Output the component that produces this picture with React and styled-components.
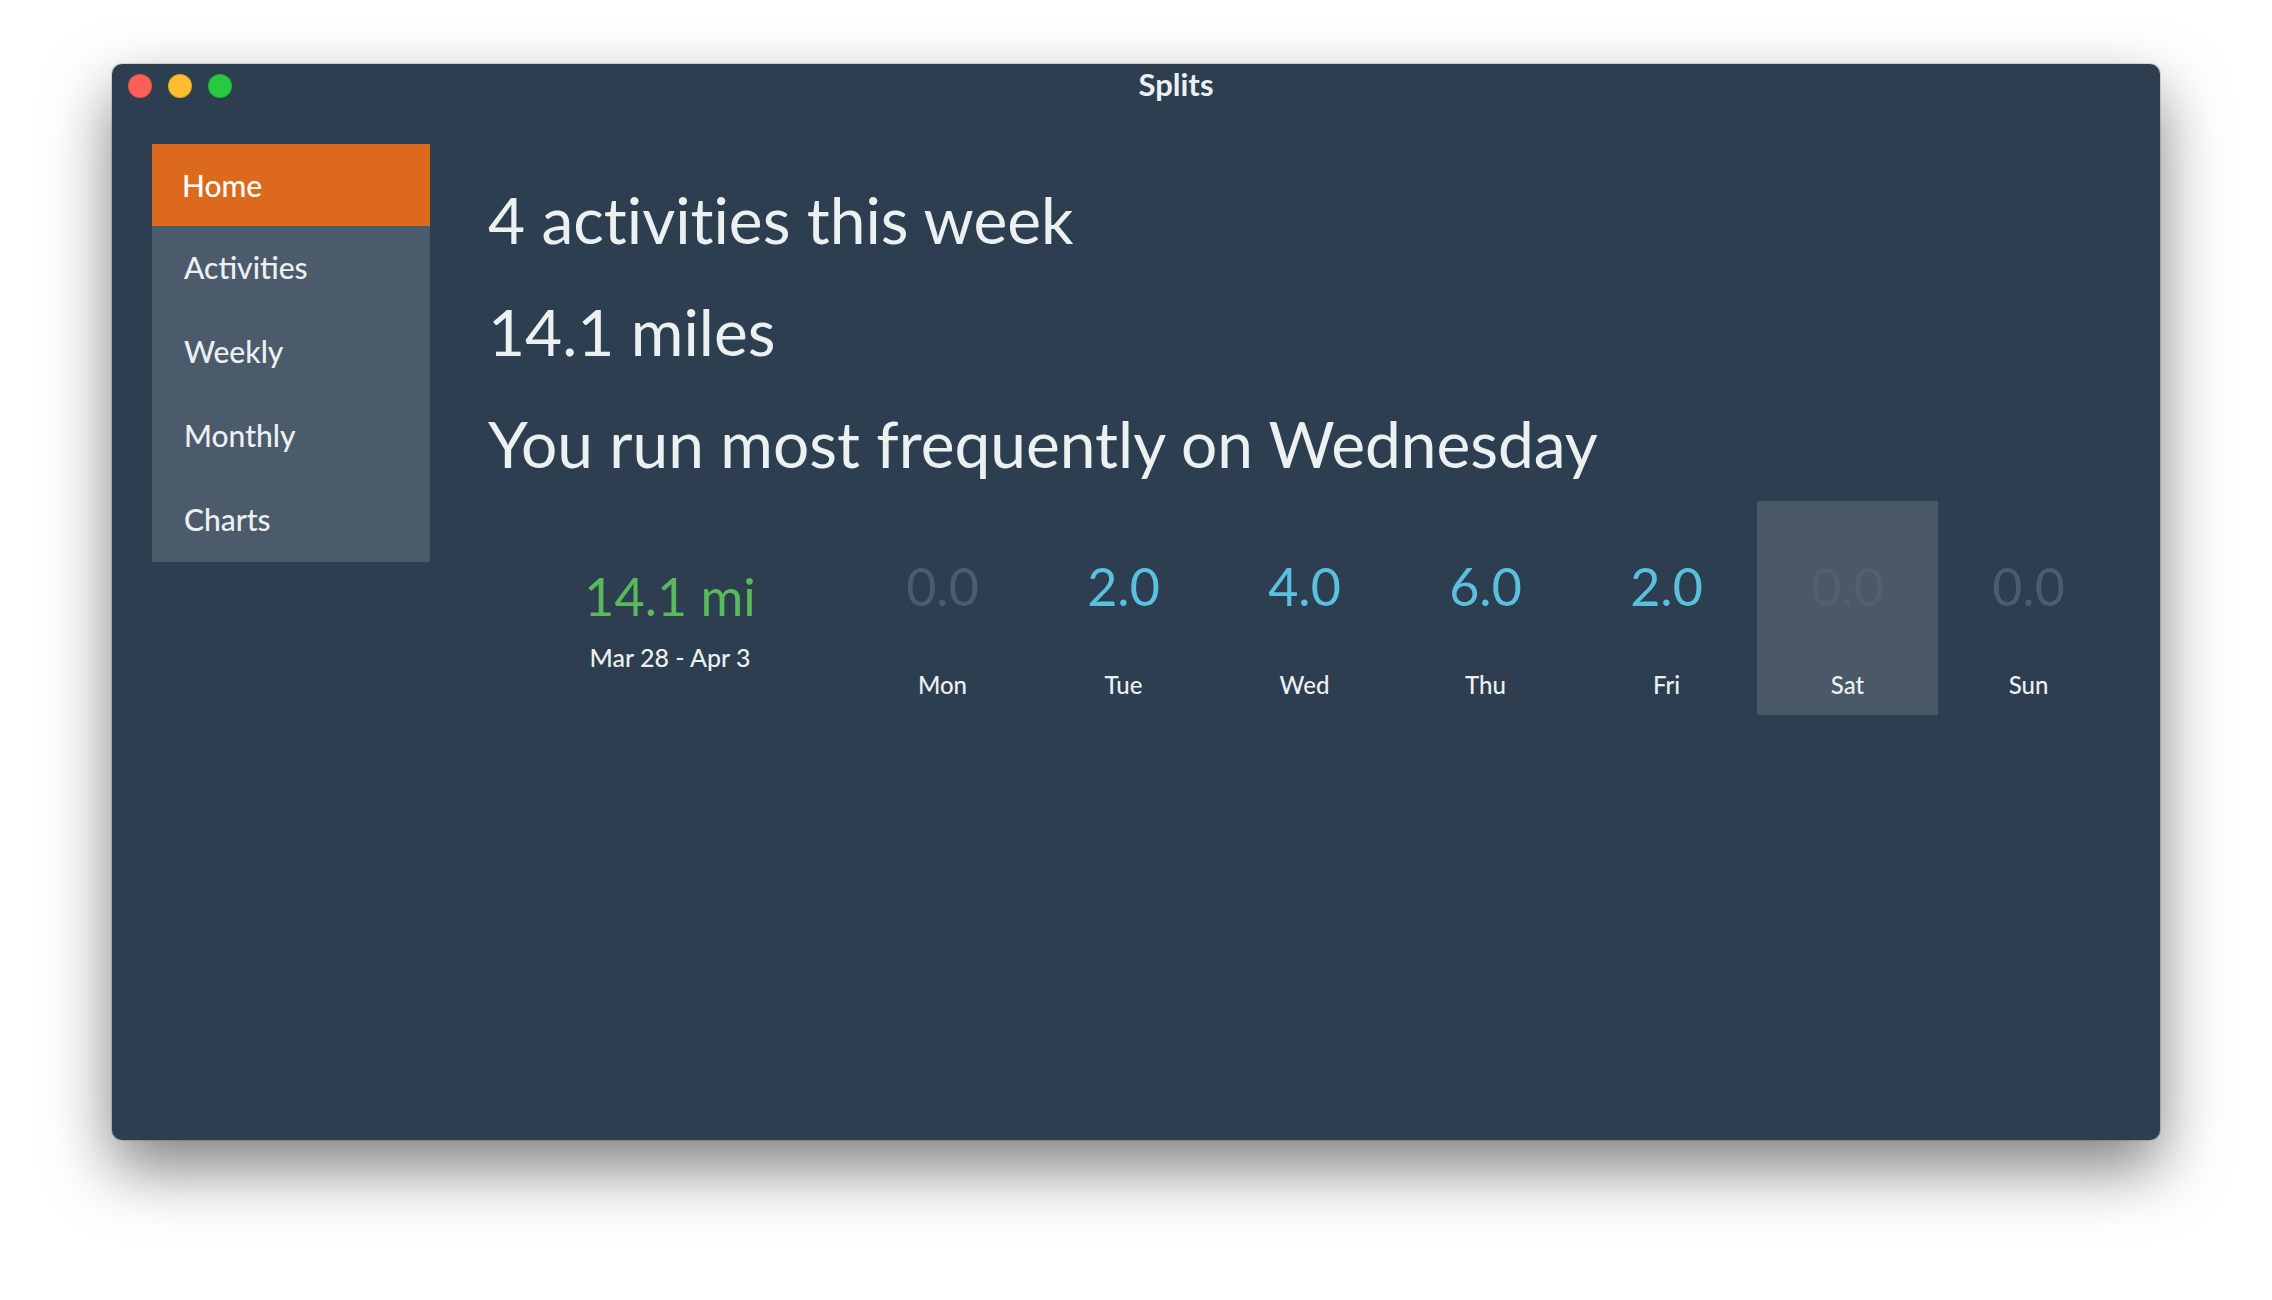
import React from "react";
import styled, { createGlobalStyle } from "styled-components";

const GlobalStyle = createGlobalStyle`
  html, body {
    margin: 0;
    padding: 0;
    background-color: #ffffff;
    font-family: "Lato", "Liberation Sans", sans-serif;
  }
`;

const Page = styled.div`
  width: 2272px;
  height: 1300px;
  padding: 64px 0 0 112px;
  box-sizing: border-box;
`;

const Window = styled.div`
  display: flex;
  flex-direction: column;
  width: 2048px;
  height: 1076px;
  background-color: #2c3e50;
  border-radius: 10px;
  box-shadow: 0 0 0 1px rgba(0, 0, 0, 0.12), 0 28px 64px rgba(0, 0, 0, 0.5);
  overflow: hidden;
`;

const TitleBar = styled.div`
  display: flex;
  align-items: center;
  height: 44px;
  padding-left: 16px;
`;

const Lights = styled.div`
  display: flex;
  gap: 16px;
`;

const Light = styled.span`
  width: 24px;
  height: 24px;
  border-radius: 50%;
  background-color: ${(props) => props.color};
  box-shadow: inset 0 0 0 1px rgba(0, 0, 0, 0.12);
`;

const Title = styled.div`
  flex: 1;
  text-align: center;
  padding-right: 40px;
  padding-bottom: 5px;
  font-weight: 700;
  font-size: 31px;
  color: #ecf0f1;
`;

const Body = styled.div`
  display: flex;
  padding: 36px 42px 0 40px;
`;

const Sidebar = styled.nav`
  display: flex;
  flex-direction: column;
  width: 278px;
  flex-shrink: 0;
  align-self: flex-start;
  background-color: #4c5b6b;
`;

const NavItem = styled.div`
  display: flex;
  align-items: center;
  height: ${(props) => (props.active ? "82px" : "84px")};
  padding-left: ${(props) => (props.active ? "30px" : "32px")};
  padding-bottom: ${(props) => (props.active ? "0" : "3px")};
  box-sizing: border-box;
  background-color: ${(props) => (props.active ? "#dd6a1c" : "transparent")};
  color: ${(props) => (props.active ? "#ffffff" : "#ecf0f1")};
  font-size: 30px;
  font-weight: 500;
`;

const Main = styled.main`
  display: flex;
  flex-direction: column;
  margin-left: 58px;
  padding-top: 38px;
`;

const Headings = styled.div`
  display: flex;
  flex-direction: column;
  gap: 35px;
`;

const Heading = styled.h1`
  margin: 0;
  font-size: 64px;
  font-weight: 400;
  line-height: 1.2;
  color: #ecf0f1;
  font-variant-ligatures: none;
`;

const WeekRow = styled.div`
  display: flex;
  margin-top: 19px;
  height: 214px;
`;

const Summary = styled.div`
  display: flex;
  flex-direction: column;
  align-items: center;
  width: 364px;
  padding-top: 64px;
  box-sizing: border-box;
`;

const Total = styled.div`
  font-size: 52px;
  line-height: 1.2;
  color: #5cb85c;
`;

const Range = styled.div`
  margin-top: 14px;
  font-size: 25px;
  font-weight: 500;
  line-height: 1.2;
  color: #ecf0f1;
`;

const DayCell = styled.div`
  display: flex;
  flex-direction: column;
  align-items: center;
  width: 181px;
  padding-top: 54px;
  box-sizing: border-box;
  background-color: ${(props) => (props.today ? "#4a5868" : "transparent")};
`;

const Miles = styled.div`
  font-size: 52px;
  line-height: 1.2;
  color: ${(props) =>
    props.zero ? (props.today ? "#506071" : "#4d5c6c") : "#5bc0de"};
`;

const DayName = styled.div`
  margin-top: 53px;
  font-size: 24px;
  font-weight: 500;
  line-height: 1.2;
  color: #ecf0f1;
`;

const navItems = ["Home", "Activities", "Weekly", "Monthly", "Charts"];

const days = [
  { name: "Mon", miles: 0 },
  { name: "Tue", miles: 2 },
  { name: "Wed", miles: 4 },
  { name: "Thu", miles: 6 },
  { name: "Fri", miles: 2 },
  { name: "Sat", miles: 0, today: true },
  { name: "Sun", miles: 0 },
];

export default function App() {
  return (
    <Page>
      <GlobalStyle />
      <Window>
        <TitleBar>
          <Lights>
            <Light color="#ff5f57" />
            <Light color="#febc2e" />
            <Light color="#28c840" />
          </Lights>
          <Title>Splits</Title>
        </TitleBar>
        <Body>
          <Sidebar>
            {navItems.map((item) => (
              <NavItem key={item} active={item === "Home"}>
                {item}
              </NavItem>
            ))}
          </Sidebar>
          <Main>
            <Headings>
              <Heading>4 activities this week</Heading>
              <Heading>14.1 miles</Heading>
              <Heading>You run most frequently on Wednesday</Heading>
            </Headings>
            <WeekRow>
              <Summary>
                <Total>14.1 mi</Total>
                <Range>Mar 28 - Apr 3</Range>
              </Summary>
              {days.map((d) => (
                <DayCell key={d.name} today={d.today}>
                  <Miles zero={d.miles === 0} today={d.today}>
                    {d.miles.toFixed(1)}
                  </Miles>
                  <DayName>{d.name}</DayName>
                </DayCell>
              ))}
            </WeekRow>
          </Main>
        </Body>
      </Window>
    </Page>
  );
}
